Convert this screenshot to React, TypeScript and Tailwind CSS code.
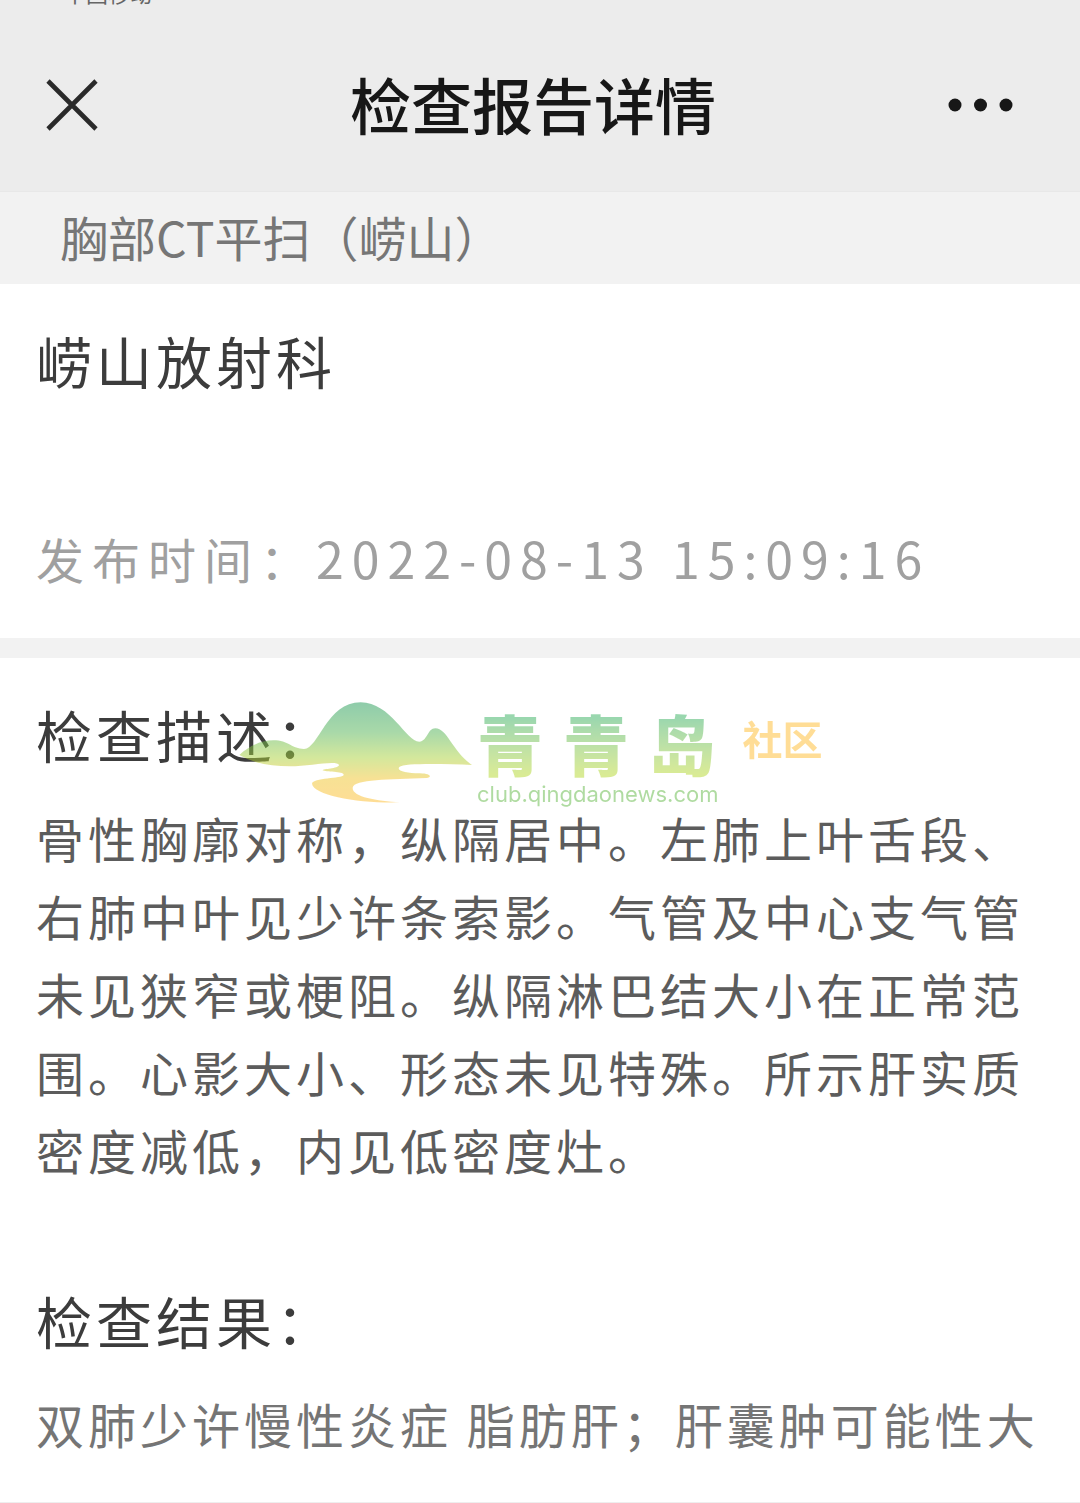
import React from "react";

function MountainMark() {
  return (
    <svg viewBox="18 65 708 303" className="h-[101px] w-[236px] shrink-0" aria-hidden="true">
      <defs>
        <linearGradient id="hill" x1="0" y1="0" x2="0" y2="1">
          <stop offset="0" stopColor="#209a58" />
          <stop offset="0.3" stopColor="#55b455" />
          <stop offset="0.55" stopColor="#a9d23c" />
          <stop offset="0.76" stopColor="#f0c52c" />
          <stop offset="1" stopColor="#ffbd2e" />
        </linearGradient>
      </defs>
      <path
        fill="url(#hill)"
        d="M28 224C58 196 95 180 130 180C176 180 186 206 222 206C266 206 290 66 392 66C482 66 528 184 568 184C592 184 592 144 616 144C652 144 668 215 726 254C640 251 522 248 508 260C498 272 530 278 570 279C604 280 606 291 590 293C480 298 372 296 368 322C366 350 440 362 510 366C390 370 250 345 246 310C248 292 336 295 341 284C343 272 285 276 278 270C275 265 325 266 327 254C320 238 240 258 180 258C120 258 70 248 28 224Z"
      />
    </svg>
  );
}

function Watermark() {
  return (
    <div className="pointer-events-none absolute left-[236px] top-11 flex opacity-50">
      <MountainMark />
      <div className="ml-[5px] flex flex-col">
        <div className="flex gap-5 bg-linear-to-b from-[#35b060] from-20% to-[#b4d82c] to-90% bg-clip-text text-[66px] font-black leading-[80px] text-transparent">
          <span>青</span>
          <span>青</span>
          <span>岛</span>
        </div>
        <div className="font-['Inter'] text-[22px] leading-6 text-[#62b845]">club.qingdaonews.com</div>
      </div>
      <div className="ml-6 pt-[14px] text-[40px] font-bold leading-[44px] text-[#ffbc30]">社区</div>
    </div>
  );
}

const headingClass = "text-[56px] font-normal leading-[80px] tracking-[4px] text-[#3c3c3c]";

export default function App() {
  return (
    <div className="bg-white font-['Noto_Sans_CJK_SC',sans-serif]" lang="zh-CN">
      <header className="border-b border-[#e8e8e8] bg-[#ececec]">
        <div className="h-8 overflow-hidden pl-16">
          <div className="-mt-5 text-[22px] leading-6 text-[#666666]">中国移动</div>
        </div>
        <div className="flex h-[159px] items-start justify-between pl-[46px] pr-[66px]">
          <button type="button" aria-label="关闭" className="mt-[47px] w-[72px]">
            <svg viewBox="0 0 52 52" className="size-[52px]" fill="none" stroke="#2a2a2a" strokeWidth="4.6">
              <path d="M2 2L50 50M50 2L2 50" />
            </svg>
          </button>
          <h1 className="mt-7 text-[61px] font-medium leading-[88px] text-[#171717]">检查报告详情</h1>
          <button type="button" aria-label="更多" className="mt-[66px]">
            <svg viewBox="0 0 66 14" className="h-[14px] w-[66px]" fill="#171717">
              <circle cx="7" cy="7" r="6.5" />
              <circle cx="32.500" cy="7" r="6.5" />
              <circle cx="58" cy="7" r="6.5" />
            </svg>
          </button>
        </div>
      </header>

      <main>
        <div className="bg-[#f2f2f2] px-[60px] pb-2 pt-1 text-[48px] leading-[80px] text-[#767676]">
          胸部CT平扫（崂山）
        </div>

        <section className="px-9 pb-[41px] pt-9">
          <h2 className={headingClass}>崂山放射科</h2>
          <p className="mt-[118px] text-[48px] leading-[78px] tracking-[8px] text-[#a0a0a0]">
            发布时间：<time className="text-[50px]">2022-08-13 15:09:16</time>
          </p>
        </section>

        <div className="h-5 bg-[#f2f2f2]" />

        <section className="relative border-b border-[#eeeeee] px-9 pb-10 pt-9">
          <h2 className={headingClass}>检查描述：</h2>
          <p className="mt-6 text-[48px] leading-[78px] tracking-[4px] text-[#5c5c5c]">
            骨性胸廓对称，纵隔居中。左肺上叶舌段、右肺中叶见少许条索影。气管及中心支气管未见狭窄或梗阻。纵隔淋巴结大小在正常范围。心影大小、形态未见特殊。所示肝实质密度减低，内见低密度灶。
          </p>
          <h2 className={`mt-[92px] ${headingClass}`}>检查结果：</h2>
          <p className="mt-6 text-[48px] leading-[78px] tracking-[4px] text-[#757575]">
            双肺少许慢性炎症 脂肪肝；肝囊肿可能性大
          </p>
          <Watermark />
        </section>
      </main>
    </div>
  );
}
